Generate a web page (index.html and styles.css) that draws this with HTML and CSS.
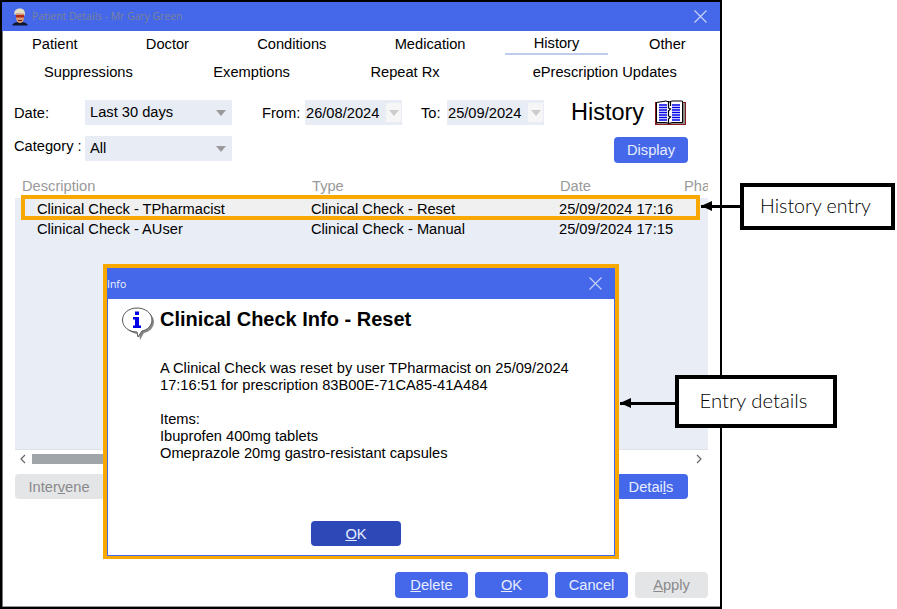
FILE: index.html
```html
<!DOCTYPE html>
<html lang="en">
<head>
<meta charset="utf-8">
<title>Patient Details</title>
<link rel="stylesheet" href="styles.css">
</head>
<body>
<div class="stage">
  <div class="window">
    <header class="titlebar">
      <svg class="face" width="18" height="18" viewBox="0 0 18 18">
        <path d="M1 17.500 C3 14 6 14 9 14 C12 14 15 14 17 17.500Z" fill="#10142c"/>
        <path d="M3.500 7 C2.500 2 6 .5 9 .5 C12.500 .5 15 3 13.500 8 L12 6 L6 5.500Z" fill="#e8e0c4"/>
        <path d="M5 5.500 H13 V10 C13 13 11 15 9 15 C7 15 5 13 5 10Z" fill="#d89a70"/>
        <path d="M5 7 H13 V9.500 H5Z" fill="#b02a20"/>
        <path d="M7 12 H11 V13 H7Z" fill="#6a2418"/>
      </svg>
      <span class="window-title">Patient Details - Mr Gary Green</span>
      <svg class="close main-close" width="13" height="13" viewBox="0 0 13 13"><path d="M.5 .5 L12.500 12.500 M12.500 .5 L.5 12.500"/></svg>
    </header>

    <nav class="tabs">
      <div class="tab-row first">
        <span class="tab">Patient</span>
        <span class="tab">Doctor</span>
        <span class="tab">Conditions</span>
        <span class="tab">Medication</span>
        <span class="tab active">History</span>
        <span class="tab other">Other</span>
      </div>
      <div class="tab-row second">
        <span class="tab">Suppressions</span>
        <span class="tab">Exemptions</span>
        <span class="tab">Repeat Rx</span>
        <span class="tab updates">ePrescription Updates</span>
      </div>
    </nav>

    <section class="filters">
      <div class="filter-row">
        <span class="label">Date:</span>
        <div class="select"><span>Last 30 days</span><i class="caret"></i></div>
        <span class="label from">From:</span>
        <div class="date"><span>26/08/2024</span><b class="date-btn"><i class="caret light"></i></b></div>
        <span class="label to">To:</span>
        <div class="date"><span>25/09/2024</span><b class="date-btn"><i class="caret light"></i></b></div>
        <h1 class="heading">History</h1>
        <svg class="book" width="32" height="26" viewBox="0 0 32 26">
          <path d="M0 2 H31 V25 H0Z" fill="#8a1c20"/>
          <path d="M28 3 H30 V23 H28Z M2 23 H30 V24 H2Z" fill="#8c8c8c"/>
          <path d="M1.500 2.500 L11 1 L14 2 L17 1 L27.500 1 V22.500 H17 L14 23.500 L11 22.500 H1.500Z" fill="#fff" stroke="#000" stroke-width="1"/>
          <path d="M4 5 H12 M4 7.500 H12 M4 10 H12 M4 12.500 H12 M4 15 H12 M4 17.500 H12 M4 20 H12 M17 5 H25 M17 7.500 H25 M17 10 H25 M17 12.500 H25 M17 15 H25 M17 17.500 H25 M17 20 H25" stroke="#0000e6" stroke-width="1.500"/>
          <path d="M13.500 1 V8 L15.500 9 L13.500 11 V16 L15.500 17 L13.500 19 V24 M15.500 2 V6" stroke="#000" stroke-width="1.200" fill="none"/>
        </svg>
      </div>
      <div class="filter-row second-filter">
        <span class="label">Category :</span>
        <div class="select"><span>All</span><i class="caret"></i></div>
        <button class="btn display">Display</button>
      </div>
    </section>

    <section class="history">
      <div class="columns">
        <span>Description</span><span>Type</span><span>Date</span><span>Pharmacist</span>
      </div>
      <div class="list">
        <div class="row selected"><span>Clinical Check - TPharmacist</span><span>Clinical Check - Reset</span><span>25/09/2024 17:16</span></div>
        <div class="row"><span>Clinical Check - AUser</span><span>Clinical Check - Manual</span><span>25/09/2024 17:15</span></div>
      </div>
      <div class="scrollbar">
        <svg class="chev" width="6" height="10" viewBox="0 0 6 10"><path d="M5 1 L1 5 L5 9"/></svg>
        <div class="thumb"></div>
        <svg class="chev" width="6" height="10" viewBox="0 0 6 10"><path d="M1 1 L5 5 L1 9"/></svg>
      </div>
    </section>

    <div class="actions">
      <button class="btn off intervene">Inter<u>v</u>ene</button>
      <button class="btn details">Detai<u>l</u>s</button>
    </div>

    <footer class="footer">
      <button class="btn"><u>D</u>elete</button>
      <button class="btn"><u>O</u>K</button>
      <button class="btn">Cancel</button>
      <button class="btn off"><u>A</u>pply</button>
    </footer>
  </div>

  <div class="entry-outline"></div>

  <div class="dialog">
    <div class="dialog-inner">
      <header class="dialog-bar">
        <span>Info</span>
        <svg class="close" width="13" height="13" viewBox="0 0 13 13"><path d="M.5 .5 L12.500 12.500 M12.500 .5 L.5 12.500"/></svg>
      </header>
      <div class="dialog-body">
        <div class="dialog-head">
          <svg class="bubble" width="34" height="34" viewBox="0 0 34 34">
            <path d="M18 3 C26 3 33 8 33 15 C33 21 28 25 23 26 L19 33 L18 27 C10 27 4 22 4 15 C4 8 10 3 18 3Z" fill="#888"/>
            <path d="M16 1 C24 1 31 6 31 13 C31 19 26 23 21 24 L17 30 L16 25 C8 25 1.500 20 1.500 13 C1.500 6 8 1 16 1Z" fill="#fff" stroke="#555" stroke-width="1"/>
            <path d="M14 4.500 H18 V8 H14Z M12 10 H18 V18.500 H20 V21 H12 V18.500 H14 V12.500 H12Z" fill="#0000e6"/>
          </svg>
          <h2>Clinical Check Info - Reset</h2>
        </div>
        <div class="message">
          <p>A Clinical Check was reset by user TPharmacist on 25/09/2024<br>17:16:51 for prescription 83B00E-71CA85-41A484</p>
          <p>Items:<br>Ibuprofen 400mg tablets<br>Omeprazole 20mg gastro-resistant capsules</p>
        </div>
        <button class="btn dialog-ok"><u>O</u>K</button>
      </div>
    </div>
  </div>

  <div class="callout callout-entry"><i class="arrow"></i><span class="callout-box">History entry</span></div>
  <div class="callout callout-details"><i class="arrow"></i><span class="callout-box">Entry details</span></div>
</div>
</body>
</html>
```
FILE: styles.css
```css
* { box-sizing: border-box; }
html, body { margin: 0; padding: 0; background: #fff; }
body { font: 14.670px "Liberation Sans", Arial, sans-serif; color: #000; }
.stage { position: relative; width: 897px; height: 609px; overflow: hidden; }
.window {
  width: 722px; height: 609px;
  border: 2px solid #000;
  display: flex; flex-direction: column;
  background: #fff;
  box-shadow: inset 1px 0 #777, inset 0 -1px #999;
}

.titlebar { height: 29px; background: #4468e9; display: flex; align-items: center; padding-left: 9px; flex: none; }
.face { flex: none; }
.window-title { margin: 0 0 2px 3px; font: 10.400px "Open Sans", sans-serif; color: #7d8296; }
.close { fill: none; stroke: #c6d2f8; stroke-width: 1.200; flex: none; }
.main-close { margin-left: auto; margin-right: 13px; }

.tabs { flex: none; }
.tab-row { display: flex; align-items: center; }
.tab-row.first { height: 26px; padding-left: 30px; gap: 68.200px; }
.tab.other { margin-left: 1.500px; }
.tab-row.second { height: 30px; padding-left: 42px; gap: 80.500px; }
.tab.updates { margin-left: 12.500px; }
.tab.active { position: relative; top: -1px; }
.tab.active::after {
  content: ""; position: absolute; left: -29px; right: -29px; bottom: -4px; height: 2px; background: #c0ccee;
}

.filters { flex: none; padding: 13px 32px 0 12px; }
.filter-row { display: flex; align-items: center; height: 25px; }
.second-filter { margin-top: 11px; height: 27px; align-items: flex-start; }
.second-filter .label { line-height: 21px; }
.label { width: 71px; flex: none; }
.label.from { width: 43px; margin-left: 30px; }
.label.to { width: 26px; margin-left: 19px; }
.select {
  width: 147px; height: 25px; background: #e8ecf5; flex: none;
  display: flex; align-items: center; justify-content: space-between; padding: 0 6px 2px 5px;
}
.select .caret { margin-top: 2px; }
.date {
  width: 97px; height: 25px; background: #e8ecf5; flex: none;
  display: flex; align-items: center; justify-content: space-between; padding: 0 1px 0 1px;
}
.date-btn { width: 15px; height: 19px; background: #f6f6f6; display: flex; align-items: center; justify-content: center; }
.caret { width: 0; height: 0; border-left: 5px solid transparent; border-right: 5px solid transparent; border-top: 6px solid #9a9a9a; }
.caret.light { border-top-color: #ccc; }
.heading { font: 400 23.500px "Liberation Sans", Arial, sans-serif; margin: 0 0 0 27px; width: 84px; flex: none; }
.book { flex: none; }

.btn {
  font: 14.670px "Liberation Sans", Arial, sans-serif;
  color: #e8edff; background: #4468e9;
  border: 0; border-radius: 4px; padding: 0;
  width: 73px; height: 26px;
}
.btn.off { background: #e4e5e7; color: #8a8a8a; }
.display { margin-left: auto; width: 74px; margin-top: 1px; }

.history { flex: none; margin: 15px 12px 0 13px; }
.columns {
  height: 20px; display: grid; grid-template-columns: 290px 248px 124px 1fr;
  padding: 0 0 5px 7px; align-items: center; color: #999; overflow: hidden; white-space: nowrap;
}
.list { height: 252px; background: #e9edf6; padding-top: 1px; border-bottom: 1px solid #dfe2e8; }
.row {
  height: 20px; margin-left: 20px; width: 665px; padding-left: 2px;
  display: grid; grid-template-columns: 274px 248px 1fr; align-items: center;
}
.row.selected { background: #f0f0f0; }
.scrollbar { height: 18px; display: flex; align-items: center; padding: 0 6px 0 5px; }
.chev { fill: none; stroke: #666; stroke-width: 1.200; flex: none; }
.thumb { width: 120px; height: 10px; background: #a0a5aa; margin-left: 6px; margin-right: auto; }

.actions { flex: none; margin: 6px 32px 0 13px; display: flex; justify-content: space-between; }
.intervene { width: 90px; height: 25px; padding-right: 2px; }
.details { width: 90px; height: 25px; padding-left: 16px; }

.footer { flex: none; margin-top: auto; padding: 0 12px 9px 0; display: flex; justify-content: flex-end; gap: 7px; }

.entry-outline { position: absolute; left: 21px; top: 195px; width: 679px; height: 25px; border: 4px solid #f9a800; }

.dialog { position: absolute; left: 103px; top: 264px; width: 516px; height: 295px; border: 4px solid #f9a800; border-bottom-width: 3px; }
.dialog-inner { height: 100%; border: 1px solid #4468e9; border-top: 0; background: #fff; display: flex; flex-direction: column; }
.dialog-bar { height: 31px; background: #4468e9; color: #eef2ff; display: flex; align-items: center; justify-content: space-between; padding-right: 13px; font: 10.500px "Open Sans", sans-serif; flex: none; margin: 0 -1px; }
.dialog-body { flex: 1; display: flex; flex-direction: column; padding: 8px 0 9px 13px; }
.dialog-head { display: flex; align-items: center; gap: 5px; height: 25px; }
.bubble { flex: none; margin-top: 8px; }
.dialog-head h2 { margin: 0; font: 700 20px "Liberation Sans", Arial, sans-serif; }
.message { padding-left: 39px; margin-top: 28px; line-height: 17px; }
.message p { margin: 0 0 17px; }
.dialog-ok { background: #2d49b8; width: 90px; height: 25px; margin: auto 0 0 190px; }

.callout { position: absolute; display: flex; align-items: center; }
.callout-box {
  background: #fff; border: 4px solid #000; display: flex; align-items: center; justify-content: center;
  font: 300 20px Lato, sans-serif; color: #000; padding-bottom: 3px;
}
.arrow { position: relative; display: block; height: 3px; background: #000; }
.arrow::before {
  content: ""; position: absolute; left: 0; top: -4px; width: 0; height: 0;
  border-top: 5.500px solid transparent; border-bottom: 5.500px solid transparent; border-right: 11px solid #000;
}
.callout-entry { left: 701px; top: 183px; }
.callout-entry .arrow { width: 39px; }
.callout-entry .callout-box { width: 155px; height: 47px; font-size: 19.600px; padding-right: 4px; }
.callout-details { left: 620px; top: 375px; }
.callout-details .arrow { width: 55px; margin-top: 3px; }
.callout-details .callout-box { width: 162px; height: 53px; font-size: 20.300px; padding-right: 5px; }
```
